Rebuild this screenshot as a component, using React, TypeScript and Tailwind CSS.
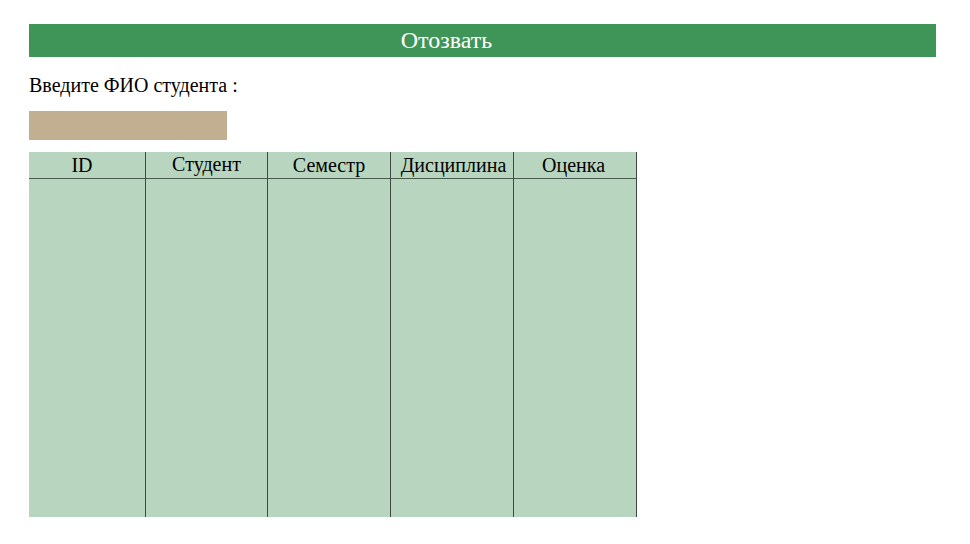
import React from "react";

const cols = [
  { name: "ID", w: "w-[117px]", pad: "pr-[10px]" },
  { name: "Студент", w: "w-[122px]", pad: "pb-[3px]" },
  { name: "Семестр", w: "w-[123px]", pad: "pr-0" },
  { name: "Дисциплина", w: "w-[123px]", pad: "pl-[3px]" },
  { name: "Оценка", w: "w-[123px]", pad: "pr-[3px]" },
];

export default function App() {
  return (
    <div
      className="w-[970px] h-[544px] bg-white pt-[24px] px-[29px]"
      style={{ fontFamily: '"Liberation Serif", "Times New Roman", serif' }}
    >
      <div className="w-[907px] h-[33px] bg-[#3f9458] flex items-center justify-center pr-[72px] pb-[2px] text-white text-[24px] leading-none">
        Отозвать
      </div>
      <div className="mt-[17px] text-[20px] leading-[22px] text-black">Введите ФИО студента :</div>
      <div className="mt-[15px] w-[198px] h-[29px] bg-[#c2ae91]" />
      <div className="mt-[12px] flex w-[608px] h-[365px] bg-[#b8d6bf]">
        {cols.map((c) => (
          <div key={c.name} className={`${c.w} h-full flex flex-col border-r border-[#3d4a40]`}>
            <div
              className={`h-[27px] border-b border-[#4a5a4d] flex items-center justify-center ${c.pad} text-[20px] leading-none text-black`}
            >
              {c.name}
            </div>
          </div>
        ))}
      </div>
    </div>
  );
}
